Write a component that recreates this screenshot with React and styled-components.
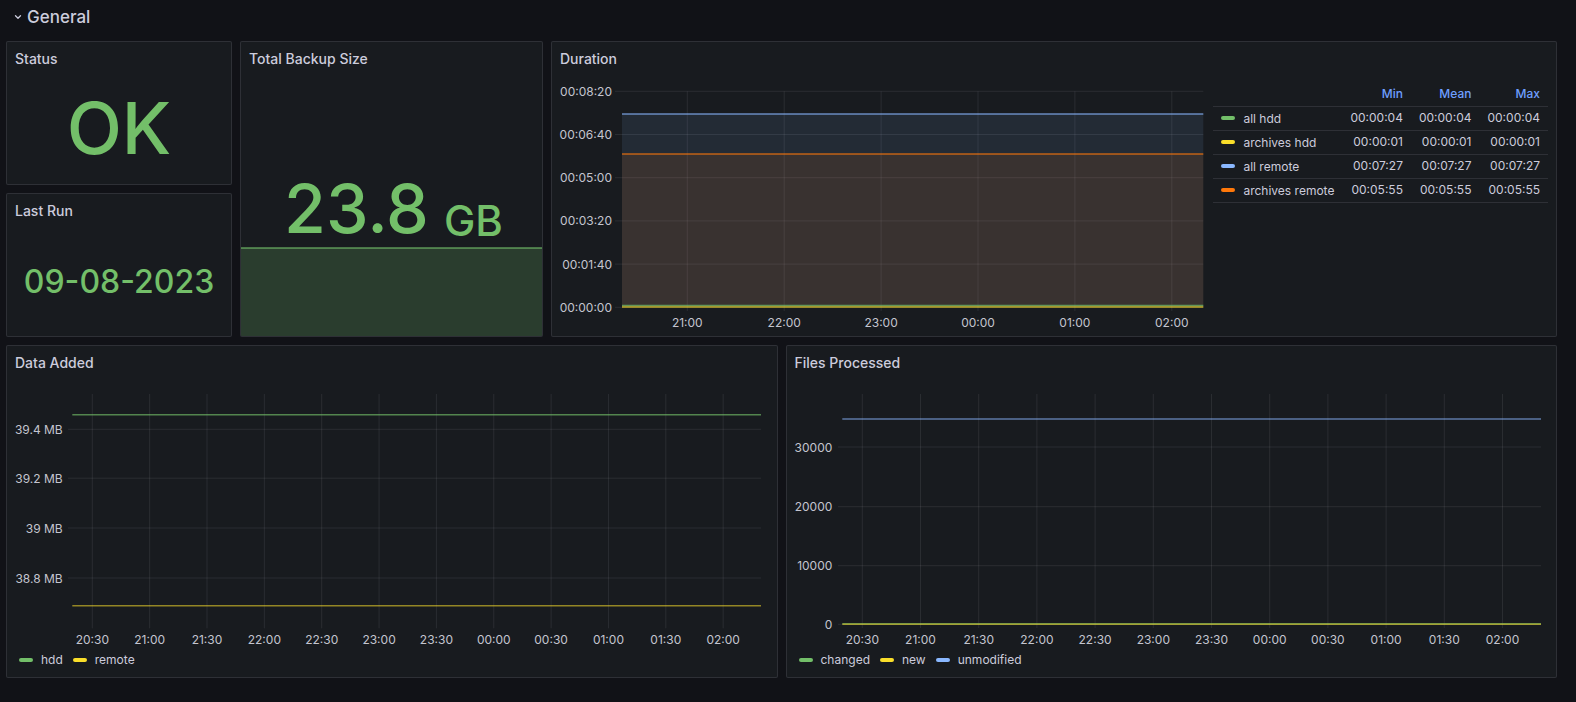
import React from 'react';
import styled, { createGlobalStyle } from 'styled-components';

const C = {
  green: '#73bf69',
  yellow: '#fade2a',
  blue: '#8ab8ff',
  orange: '#ff780a',
  text: '#ccccdc',
  axis: '#c4c5cf',
  grid: 'rgba(204,204,220,0.1)',
};

const GlobalStyle = createGlobalStyle`
  html, body { margin: 0; padding: 0; background: #111217; }
  body {
    font-family: Inter, "Noto Sans", sans-serif;
    color: ${C.text};
    -webkit-font-smoothing: antialiased;
  }
  * { box-sizing: border-box; }
`;

const Page = styled.div`
  width: 1576px;
  height: 702px;
  padding: 0 19px 0 6px;
  overflow: hidden;
`;

const RowHeader = styled.div`
  height: 33px;
  margin-bottom: 8px;
  display: flex;
  align-items: center;
  gap: 5px;
  padding-left: 8px;
  font-size: 17px;
  font-weight: 500;
  color: ${C.text};
`;

const TopRow = styled.div`
  display: grid;
  grid-template-columns: 226px 303px 1fr;
  gap: 8px;
  height: 296px;
`;

const StackCol = styled.div`
  display: grid;
  grid-template-rows: 1fr 1fr;
  gap: 8px;
  min-height: 0;
`;

const BottomRow = styled.div`
  display: grid;
  grid-template-columns: 1fr 1fr;
  gap: 8px;
  height: 333px;
  margin-top: 8px;
`;

const Panel = styled.section`
  background: #181b1f;
  border: 1px solid rgba(204, 204, 220, 0.12);
  border-radius: 2px;
  display: flex;
  flex-direction: column;
  min-height: 0;
  overflow: hidden;
`;

const PanelHeader = styled.h2`
  margin: 0;
  height: 32px;
  flex-shrink: 0;
  display: flex;
  align-items: center;
  padding: 0 8px;
  font-size: 14px;
  font-weight: 500;
  color: ${C.text};
`;

const StatBody = styled.div`
  flex: 1;
  display: flex;
  align-items: center;
  justify-content: center;
  color: ${C.green};
  font-size: ${(p) => p.$size}px;
  font-weight: 500;
  line-height: 1;
  padding-bottom: ${(p) => p.$lift || 0}px;
  padding-top: ${(p) => p.$drop || 0}px;
`;

const SizeBody = styled.div`
  flex: 1;
  display: flex;
  flex-direction: column;
  min-height: 0;
`;

const SizeValueArea = styled.div`
  flex: 1;
  display: flex;
  align-items: flex-end;
  justify-content: center;
  padding-bottom: 5px;
  padding-left: 4px;
  color: ${C.green};
  font-weight: 500;
  line-height: 1;
`;

const BigNumber = styled.span`
  font-size: 68px;
`;

const Unit = styled.span`
  font-size: 42px;
  margin-left: 15px;
`;

const Spark = styled.svg`
  display: block;
  width: 100%;
  height: 89px;
  flex-shrink: 0;
`;

const ChartBody = styled.div`
  flex: 1;
  min-height: 0;
  padding: 8px;
  display: flex;
  flex-direction: ${(p) => (p.$row ? 'row' : 'column')};
  gap: ${(p) => (p.$row ? 8 : 0)}px;
`;

const ChartSvg = styled.svg`
  display: block;
  flex: 1;
  min-width: 0;
  overflow: visible;
  font-family: Inter, "Noto Sans", sans-serif;
  font-size: 12px;
`;

const LegendTable = styled.table`
  align-self: flex-start;
  border-collapse: collapse;
  font-size: 12px;
  flex-shrink: 0;
`;

const LegendTh = styled.th`
  height: 24px;
  padding: 0 8px;
  text-align: right;
  font-weight: 500;
  color: #6e9fff;
  border-bottom: 1px solid rgba(204, 204, 220, 0.12);
`;

const LegendTd = styled.td`
  height: 24px;
  padding: 0 8px 2px;
  text-align: ${(p) => (p.$name ? 'left' : 'right')};
  color: ${C.text};
  white-space: nowrap;
  border-bottom: 1px solid rgba(204, 204, 220, 0.12);
`;

const SeriesName = styled.span`
  display: inline-flex;
  align-items: center;
  gap: 8px;
`;

const Swatch = styled.i`
  display: inline-block;
  width: 14px;
  height: 4px;
  border-radius: 2px;
  background: ${(p) => p.$color};
`;

const LegendList = styled.div`
  height: 19px;
  flex-shrink: 0;
  display: flex;
  align-items: center;
  gap: 10px;
  padding-left: 4px;
  font-size: 12px;
  color: ${C.text};
`;

const LegendItem = styled.span`
  display: inline-flex;
  align-items: center;
  gap: 8px;
`;

function Chevron() {
  return (
    <svg width="8" height="8" viewBox="0 0 8 8">
      <path d="M1.5 2.8 L4 5.2 L6.5 2.8" fill="none" stroke={C.text} strokeWidth="1.3" strokeLinecap="round" strokeLinejoin="round" />
    </svg>
  );
}

function Chart({ height, labelRight, gridLeft, gridRight, yTicks, xTicks, vTop, vBottom, xLabelY, fills = [], lines = [] }) {
  return (
    <ChartSvg height={height}>
      {yTicks.map((t) => (
        <g key={t.label}>
          <line x1={gridLeft} x2={gridRight} y1={t.y} y2={t.y} stroke={C.grid} strokeWidth="1" />
          <text x={labelRight} y={t.y} textAnchor="end" dominantBaseline="central" fill={C.axis}>
            {t.label}
          </text>
        </g>
      ))}
      {xTicks.map((t) => (
        <g key={t.label}>
          <line x1={t.x} x2={t.x} y1={vTop} y2={vBottom} stroke={C.grid} strokeWidth="1" />
          <text x={t.x} y={xLabelY} textAnchor="middle" dominantBaseline="central" fill={C.axis}>
            {t.label}
          </text>
        </g>
      ))}
      {fills.map((f, i) => (
        <rect key={'f' + i} x={f.x0} y={f.y} width={f.x1 - f.x0} height={f.bottom - f.y} fill={f.color} fillOpacity={f.opacity} />
      ))}
      {lines.map((l, i) => (
        <line key={'l' + i} x1={l.x0} x2={l.x1} y1={l.y} y2={l.y} stroke={l.color} strokeOpacity={l.opacity ?? 0.7} strokeWidth={l.w ?? 1.5} />
      ))}
    </ChartSvg>
  );
}

const seq = (labels, start, step) => labels.map((label, i) => ({ label, x: start + step * i }));

const halfHours = ['20:30', '21:00', '21:30', '22:00', '22:30', '23:00', '23:30', '00:00', '00:30', '01:00', '01:30', '02:00'];

const durationRows = [
  { name: 'all hdd', color: C.green, v: '00:00:04' },
  { name: 'archives hdd', color: C.yellow, v: '00:00:01' },
  { name: 'all remote', color: C.blue, v: '00:07:27' },
  { name: 'archives remote', color: C.orange, v: '00:05:55' },
];

export default function App() {
  const dBottom = 225.3;
  return (
    <Page>
      <GlobalStyle />
      <RowHeader>
        <Chevron />
        <span>General</span>
      </RowHeader>

      <TopRow>
        <StackCol>
          <Panel>
            <PanelHeader>Status</PanelHeader>
            <StatBody $size={72} $lift={2}>OK</StatBody>
          </Panel>
          <Panel>
            <PanelHeader>Last Run</PanelHeader>
            <StatBody $size={32} $drop={1}>09-08-2023</StatBody>
          </Panel>
        </StackCol>

        <Panel>
          <PanelHeader>Total Backup Size</PanelHeader>
          <SizeBody>
            <SizeValueArea>
              <BigNumber>23.8</BigNumber>
              <Unit>GB</Unit>
            </SizeValueArea>
            <Spark>
              <rect x="0" y="1" width="100%" height="88" fill={C.green} fillOpacity="0.21" />
              <line x1="0" x2="100%" y1="1" y2="1" stroke={C.green} strokeOpacity="0.75" strokeWidth="1.5" />
            </Spark>
          </SizeBody>
        </Panel>

        <Panel>
          <PanelHeader>Duration</PanelHeader>
          <ChartBody $row>
            <Chart
              height={246}
              labelRight={52}
              gridLeft={55}
              gridRight={643.3}
              yTicks={['00:08:20', '00:06:40', '00:05:00', '00:03:20', '00:01:40', '00:00:00'].map((label, i) => ({ label, y: 9.3 + 43.2 * i }))}
              xTicks={seq(['21:00', '22:00', '23:00', '00:00', '01:00', '02:00'], 127.3, 96.9)}
              vTop={9.3}
              vBottom={229}
              xLabelY={240.7}
              fills={[
                { x0: 62, x1: 643.3, y: 32, bottom: dBottom, color: C.blue, opacity: 0.1 },
                { x0: 62, x1: 643.3, y: 72, bottom: dBottom, color: C.orange, opacity: 0.1 },
              ]}
              lines={[
                { x0: 62, x1: 643.3, y: 32, color: C.blue },
                { x0: 62, x1: 643.3, y: 72, color: C.orange },
                { x0: 62, x1: 643.3, y: 223.6, color: C.green },
                { x0: 62, x1: 643.3, y: 224.9, color: C.yellow },
              ]}
            />
            <LegendTable>
              <thead>
                <tr>
                  <LegendTh />
                  <LegendTh>Min</LegendTh>
                  <LegendTh>Mean</LegendTh>
                  <LegendTh>Max</LegendTh>
                </tr>
              </thead>
              <tbody>
                {durationRows.map((r) => (
                  <tr key={r.name}>
                    <LegendTd $name>
                      <SeriesName>
                        <Swatch $color={r.color} />
                        {r.name}
                      </SeriesName>
                    </LegendTd>
                    <LegendTd>{r.v}</LegendTd>
                    <LegendTd>{r.v}</LegendTd>
                    <LegendTd>{r.v}</LegendTd>
                  </tr>
                ))}
              </tbody>
            </LegendTable>
          </ChartBody>
        </Panel>
      </TopRow>

      <BottomRow>
        <Panel>
          <PanelHeader>Data Added</PanelHeader>
          <ChartBody>
            <Chart
              height={264}
              labelRight={47.7}
              gridLeft={53}
              gridRight={746}
              yTicks={[
                { label: '39.4 MB', y: 43.3 },
                { label: '39.2 MB', y: 92.2 },
                { label: '39 MB', y: 142 },
                { label: '38.8 MB', y: 192 },
              ]}
              xTicks={seq(halfHours, 77.3, 57.35)}
              vTop={8}
              vBottom={242.3}
              xLabelY={253.3}
              lines={[
                { x0: 57.3, x1: 746, y: 28.7, color: C.green, opacity: 0.65 },
                { x0: 57.3, x1: 746, y: 219.7, color: C.yellow, opacity: 0.55 },
              ]}
            />
            <LegendList>
              <LegendItem><Swatch $color={C.green} />hdd</LegendItem>
              <LegendItem><Swatch $color={C.yellow} />remote</LegendItem>
            </LegendList>
          </ChartBody>
        </Panel>

        <Panel>
          <PanelHeader>Files Processed</PanelHeader>
          <ChartBody>
            <Chart
              height={264}
              labelRight={37.3}
              gridLeft={43}
              gridRight={746}
              yTicks={[
                { label: '30000', y: 61 },
                { label: '20000', y: 120.7 },
                { label: '10000', y: 179.7 },
                { label: '0', y: 238.3 },
              ]}
              xTicks={seq(halfHours, 67.3, 58.2)}
              vTop={8}
              vBottom={242}
              xLabelY={253.3}
              lines={[
                { x0: 47.3, x1: 746, y: 33, color: C.blue, opacity: 0.6 },
                { x0: 47.3, x1: 746, y: 237.8, color: C.green, opacity: 0.6 },
                { x0: 47.3, x1: 746, y: 238.3, color: C.yellow, opacity: 0.55 },
              ]}
            />
            <LegendList>
              <LegendItem><Swatch $color={C.green} />changed</LegendItem>
              <LegendItem><Swatch $color={C.yellow} />new</LegendItem>
              <LegendItem><Swatch $color={C.blue} />unmodified</LegendItem>
            </LegendList>
          </ChartBody>
        </Panel>
      </BottomRow>
    </Page>
  );
}
